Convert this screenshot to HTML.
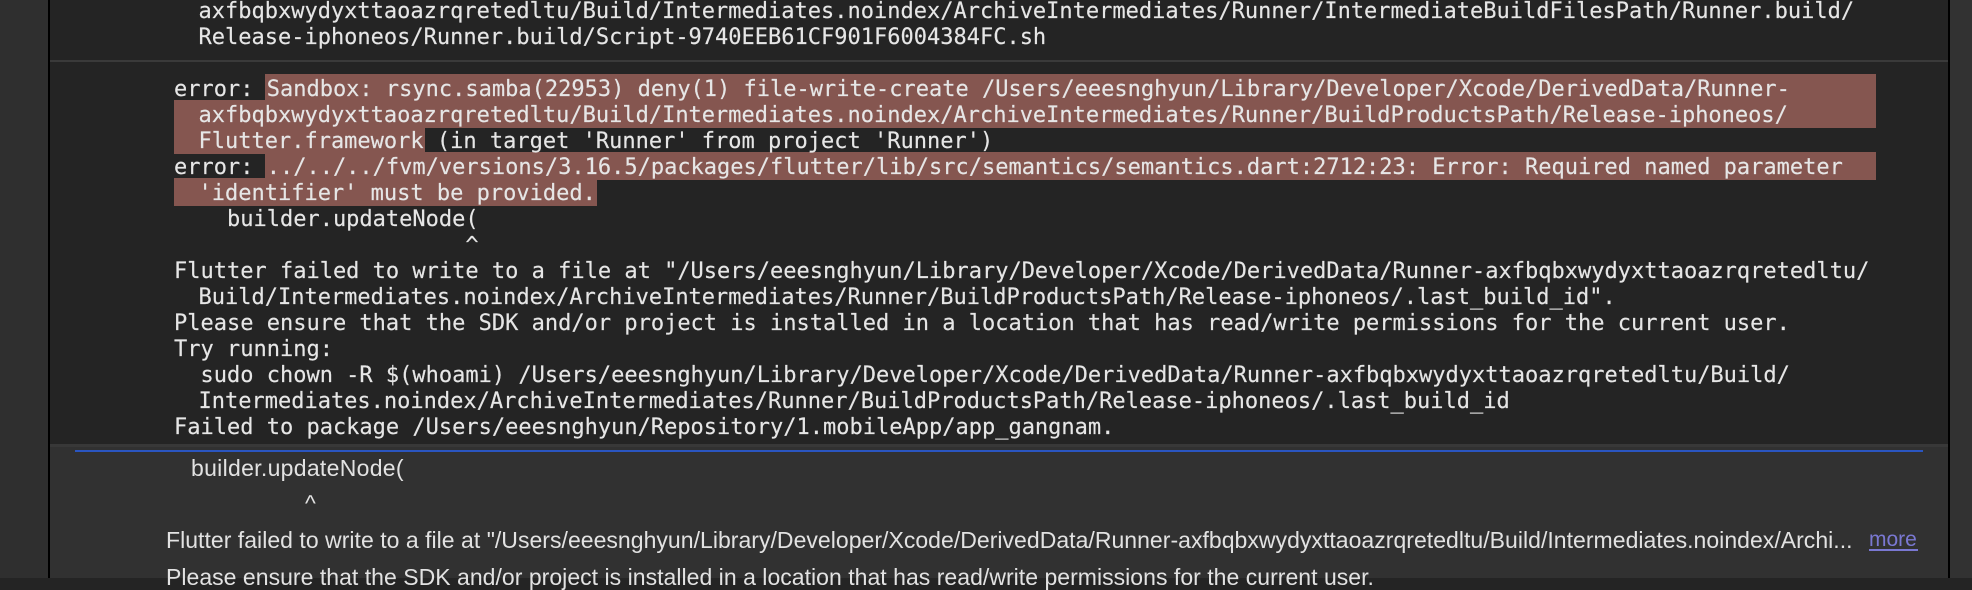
<!DOCTYPE html>
<html>
<head>
<meta charset="utf-8">
<style>
html,body{margin:0;padding:0;width:1972px;height:578px;overflow:hidden;background:#242424;}
.a{position:absolute;}
pre{position:absolute;left:174px;margin:0;font:22px/26px "DejaVu Sans Mono","Liberation Mono",monospace;color:#e6e6e6;white-space:pre;-webkit-text-stroke:.15px #e6e6e6;}
pre.w{left:172px;}
.h{position:absolute;background:#855650;}
.s{position:absolute;margin:0;font:23px/26px "Liberation Sans",Arial,sans-serif;color:#e2e2e2;white-space:pre;letter-spacing:.03px;}
</style>
</head>
<body>
<div class="a" style="left:0;top:0;width:48px;height:578px;background:#2f2f2f"></div>
<div class="a" style="left:48px;top:0;width:2px;height:578px;background:#000"></div>
<div class="a" style="left:1948px;top:0;width:2px;height:578px;background:#000"></div>
<div class="a" style="left:1950px;top:0;width:22px;height:578px;background:#323232"></div>
<div class="a" style="left:50px;top:60px;width:1898px;height:2px;background:#3a3a3a"></div>

<div class="h" style="left:265px;top:74px;width:1611px;height:26px"></div>
<div class="h" style="left:174px;top:100px;width:1702px;height:28px"></div>
<div class="h" style="left:174px;top:128px;width:251px;height:26px"></div>
<div class="h" style="left:265px;top:152px;width:1611px;height:28px"></div>
<div class="h" style="left:174px;top:178px;width:423px;height:28px"></div>
<div class="a" style="left:174px;top:154px;width:91px;height:24px;background:#242424"></div>

<pre class="w" style="top:-1px">  axfbqbxwydyxttaoazrqretedltu/Build/Intermediates.noindex/ArchiveIntermediates/Runner/IntermediateBuildFilesPath/Runner.build/</pre>
<pre class="w" style="top:25px">  Release-iphoneos/Runner.build/Script-9740EEB61CF901F6004384FC.sh</pre>
<pre style="top:77px">error: Sandbox: rsync.samba(22953) deny(1) file-write-create /Users/eeesnghyun/Library/Developer/Xcode/DerivedData/Runner-</pre>
<pre class="w" style="top:103px">  axfbqbxwydyxttaoazrqretedltu/Build/Intermediates.noindex/ArchiveIntermediates/Runner/BuildProductsPath/Release-iphoneos/</pre>
<pre class="w" style="top:129px">  Flutter.framework (in target 'Runner' from project 'Runner')</pre>
<pre style="top:155px">error: ../../../fvm/versions/3.16.5/packages/flutter/lib/src/semantics/semantics.dart:2712:23: Error: Required named parameter</pre>
<pre class="w" style="top:181px">  'identifier' must be provided.</pre>
<pre style="top:207px">    builder.updateNode(</pre>
<pre style="top:233px">                      ^</pre>
<pre style="top:259px">Flutter failed to write to a file at "/Users/eeesnghyun/Library/Developer/Xcode/DerivedData/Runner-axfbqbxwydyxttaoazrqretedltu/</pre>
<pre class="w" style="top:285px">  Build/Intermediates.noindex/ArchiveIntermediates/Runner/BuildProductsPath/Release-iphoneos/.last_build_id".</pre>
<pre style="top:311px">Please ensure that the SDK and/or project is installed in a location that has read/write permissions for the current user.</pre>
<pre style="top:337px">Try running:</pre>
<pre style="top:363px">  sudo chown -R $(whoami) /Users/eeesnghyun/Library/Developer/Xcode/DerivedData/Runner-axfbqbxwydyxttaoazrqretedltu/Build/</pre>
<pre class="w" style="top:389px">  Intermediates.noindex/ArchiveIntermediates/Runner/BuildProductsPath/Release-iphoneos/.last_build_id</pre>
<pre style="top:415px">Failed to package /Users/eeesnghyun/Repository/1.mobileApp/app_gangnam.</pre>

<div class="a" style="left:50px;top:444px;width:1898px;height:134px;background:#313131"></div>
<div class="a" style="left:50px;top:444px;width:1898px;height:3px;background:#383838"></div>
<div class="a" style="left:75px;top:450px;width:1848px;height:2px;background:#2a55c0"></div>

<div class="s" style="left:191px;top:455px;letter-spacing:.3px">builder.updateNode(</div>
<div class="s" style="left:305px;top:490px">^</div>
<div class="s" style="left:166px;top:527px">Flutter failed to write to a file at "/Users/eeesnghyun/Library/Developer/Xcode/DerivedData/Runner-axfbqbxwydyxttaoazrqretedltu/Build/Intermediates.noindex/Archi...</div>
<div class="s" style="left:1869px;top:527px;color:#7a78d2;font-size:21px;letter-spacing:0">more</div>
<div class="a" style="left:1869px;top:549px;width:49px;height:2px;background:#7a78d2"></div>
<div class="s" style="left:166px;top:564px">Please ensure that the SDK and/or project is installed in a location that has read/write permissions for the current user.</div>
</body>
</html>
